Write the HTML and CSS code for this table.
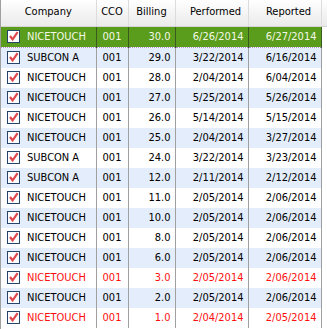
FILE: index.html
```html
<!DOCTYPE html>
<html lang="en">
<head>
    <meta charset="UTF-8">
    <title>Billing grid</title>
    <link rel="stylesheet" href="styles.css">
</head>
<body>

<div class="grade">
    <table>
        <colgroup>
            <col class="col-company">
            <col class="col-cco">
            <col class="col-billing">
            <col class="col-performed">
            <col class="col-reported">
            <col class="col-resto">
        </colgroup>
        <thead>
            <tr>
                <th>Company</th>
                <th>CCO</th>
                <th>Billing</th>
                <th class="desloca">Performed</th>
                <th class="desloca">Reported</th>
                <th class="resto"></th>
            </tr>
        </thead>
        <tbody id="linhas"></tbody>
    </table>
</div>

<script>
    const linhas = [
        ['NICETOUCH', '001', '30.0', '6/26/2014', '6/27/2014', 'selecionada'],
        ['SUBCON A', '001', '29.0', '3/22/2014', '6/16/2014', ''],
        ['NICETOUCH', '001', '28.0', '2/04/2014', '6/04/2014', ''],
        ['NICETOUCH', '001', '27.0', '5/25/2014', '5/26/2014', ''],
        ['NICETOUCH', '001', '26.0', '5/14/2014', '5/15/2014', ''],
        ['NICETOUCH', '001', '25.0', '2/04/2014', '3/27/2014', ''],
        ['SUBCON A', '001', '24.0', '3/22/2014', '3/23/2014', ''],
        ['SUBCON A', '001', '12.0', '2/11/2014', '2/12/2014', ''],
        ['NICETOUCH', '001', '11.0', '2/05/2014', '2/06/2014', ''],
        ['NICETOUCH', '001', '10.0', '2/05/2014', '2/06/2014', ''],
        ['NICETOUCH', '001', '8.0', '2/05/2014', '2/06/2014', ''],
        ['NICETOUCH', '001', '6.0', '2/05/2014', '2/06/2014', ''],
        ['NICETOUCH', '001', '3.0', '2/05/2014', '2/06/2014', 'alerta'],
        ['NICETOUCH', '001', '2.0', '2/05/2014', '2/06/2014', ''],
        ['NICETOUCH', '001', '1.0', '2/04/2014', '2/05/2014', 'alerta']
    ];

    const marca = '<span class="caixa"><svg width="11" height="11" viewBox="0 0 11 11"><path d="M2 5 L4.6 8.3 L9.6 1.2" fill="none" stroke="#e04a4e" stroke-width="2.2"/></svg></span>';

    let html = '';
    linhas.forEach((l, i) => {
        let classe = i % 2 === 1 ? 'par' : '';
        if (l[5]) classe += ' ' + l[5];
        html += `
            <tr class="${classe}">
                <td class="empresa">${marca}${l[0]}</td>
                <td class="centro">${l[1]}</td>
                <td class="direita">${l[2]}</td>
                <td class="direita">${l[3]}</td>
                <td class="direita">${l[4]}</td>
                <td class="resto"></td>
            </tr>`;
    });
    document.getElementById('linhas').innerHTML = html;
</script>

</body>
</html>
```

FILE: styles.css
```css
body {
    margin: 0;
    padding: 0;
    background: #fff;
    font-family: 'DejaVu Sans Condensed', 'DejaVu Sans', sans-serif;
    font-stretch: condensed;
    font-size: 11px;
    color: #000;
}
.grade {
    width: 327px;
    height: 329px;
    overflow: hidden;
    border-left: 1px solid #a0a0a0;
    box-sizing: border-box;
}
table {
    border-collapse: collapse;
    table-layout: fixed;
    width: 326px;
}
.col-company { width: 95px; }
.col-cco { width: 32px; }
.col-billing { width: 47px; }
.col-performed { width: 73px; }
.col-reported { width: 73px; }
.col-resto { width: 6px; }
th {
    height: 26px;
    padding: 0 0 2px 0;
    font-weight: normal;
    text-align: center;
    background: linear-gradient(#ffffff, #f2f2f2 60%, #ebebeb);
    border-right: 1px solid #dcdcdc;
    border-bottom: 1px solid #d5d5d5;
    box-sizing: border-box;
    white-space: nowrap;
}
th.desloca {
    padding-left: 8px;
}
th.resto {
    border-right: none;
}
td {
    height: 20px;
    padding: 0 4px;
    border-right: 1px solid #a0a0a0;
    white-space: nowrap;
    overflow: hidden;
}
td.resto {
    border-right: none;
    background: #fff;
}
tr.par td {
    background: #e3edfb;
}
tr.par td.resto {
    background: #fff;
}
.centro { text-align: center; }
.direita { text-align: right; }
.empresa {
    padding-left: 6px;
}
.caixa {
    display: inline-block;
    width: 11px;
    height: 11px;
    border: 1px solid #25456a;
    background: #fff;
    vertical-align: -3px;
    margin-right: 7px;
}
.caixa svg {
    display: block;
}
tr.selecionada td {
    background: #5a9c1b;
    color: #f4f8e6;
    border-top: 1px dotted #b28ad0;
    border-bottom: 1px dotted #b28ad0;
    border-right-color: #3a5a20;
}
tr.selecionada td.resto {
    background: #fff;
    border: none;
}
tr.alerta td {
    color: #ff1010;
}
```
